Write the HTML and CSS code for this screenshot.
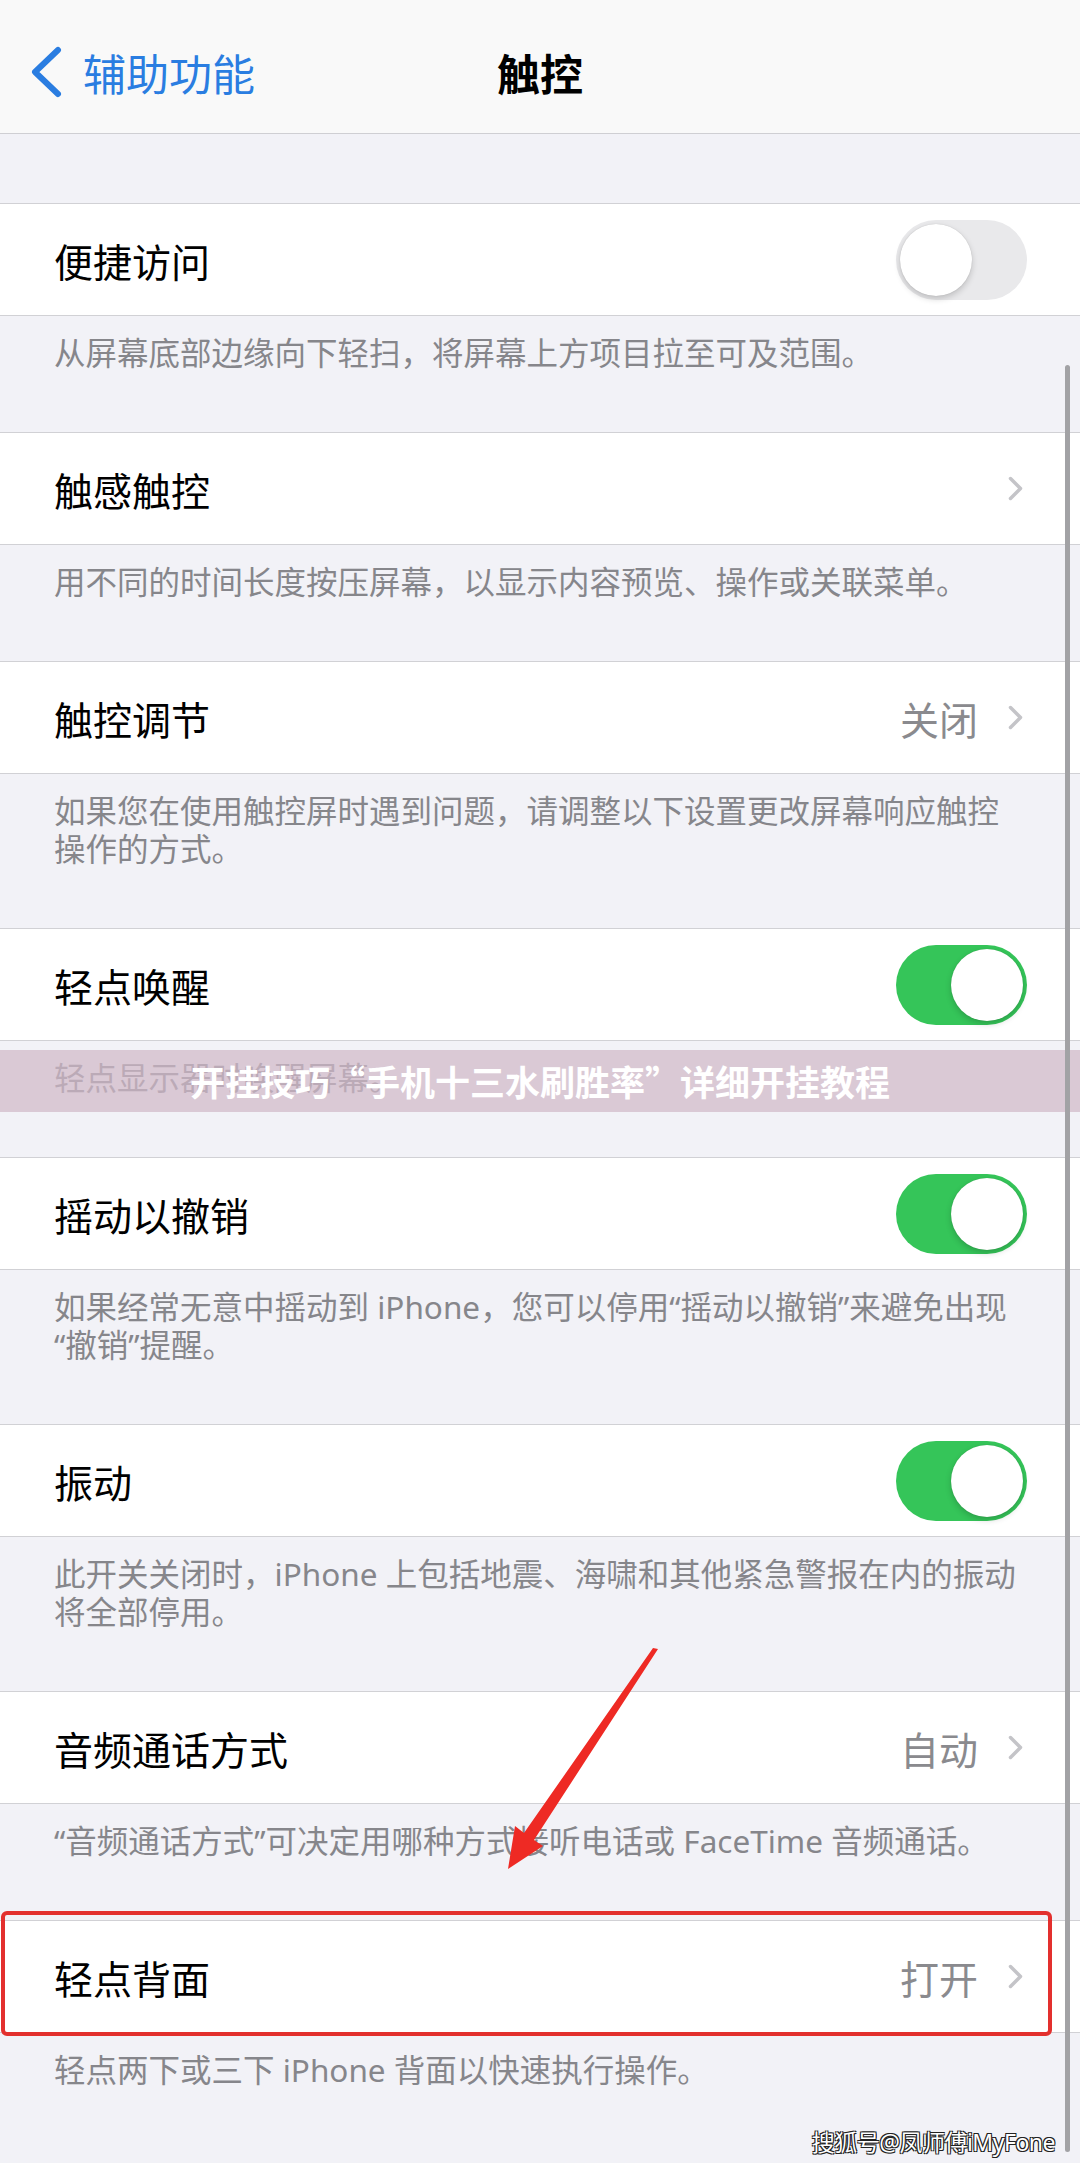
FILE: index.html
```html
<!DOCTYPE html>
<html lang="zh-CN">
<head>
    <meta charset="UTF-8">
    <meta name="viewport" content="width=device-width, initial-scale=1.0">
    <title>触控</title>
    <link rel="stylesheet" href="styles.css">
</head>
<body>
<div class="screen">
    <header class="navbar">
        <a class="back" href="#">
            <svg class="back_icon" width="34" height="52" viewBox="0 0 34 52">
                <polyline points="28,4 5,26 28,48" fill="none" stroke="#2a7de1" stroke-width="6" stroke-linecap="round" stroke-linejoin="round"/>
            </svg>
            <span>辅助功能</span>
        </a>
        <h1 class="title">触控</h1>
        <div></div>
    </header>

    <main class="list">
        <section class="group">
            <div class="cell">
                <span class="label">便捷访问</span>
                <span class="switch"></span>
            </div>
            <p class="footer">从屏幕底部边缘向下轻扫，将屏幕上方项目拉至可及范围。</p>
        </section>

        <section class="group">
            <div class="cell">
                <span class="label">触感触控</span>
                <span class="chevron"></span>
            </div>
            <p class="footer">用不同的时间长度按压屏幕，以显示内容预览、操作或关联菜单。</p>
        </section>

        <section class="group">
            <div class="cell">
                <span class="label">触控调节</span>
                <span class="value">关闭</span>
                <span class="chevron"></span>
            </div>
            <p class="footer">如果您在使用触控屏时遇到问题，请调整以下设置更改屏幕响应触控<br>操作的方式。</p>
        </section>

        <section class="group">
            <div class="cell">
                <span class="label">轻点唤醒</span>
                <span class="switch on"></span>
            </div>
            <p class="footer">轻点显示器时唤醒屏幕。</p>
        </section>

        <section class="group">
            <div class="cell">
                <span class="label">摇动以撤销</span>
                <span class="switch on"></span>
            </div>
            <p class="footer">如果经常无意中摇动到 iPhone，您可以停用“摇动以撤销”来避免出现<br>“撤销”提醒。</p>
        </section>

        <section class="group">
            <div class="cell">
                <span class="label">振动</span>
                <span class="switch on"></span>
            </div>
            <p class="footer">此开关关闭时，iPhone 上包括地震、海啸和其他紧急警报在内的振动<br>将全部停用。</p>
        </section>

        <section class="group">
            <div class="cell">
                <span class="label">音频通话方式</span>
                <span class="value">自动</span>
                <span class="chevron"></span>
            </div>
            <p class="footer">“音频通话方式”可决定用哪种方式接听电话或 FaceTime 音频通话。</p>
        </section>

        <section class="group">
            <div class="cell marked">
                <span class="label">轻点背面</span>
                <span class="value">打开</span>
                <span class="chevron"></span>
            </div>
            <p class="footer">轻点两下或三下 iPhone 背面以快速执行操作。</p>
        </section>
    </main>

    <!-- 覆盖在画面上的东西 -->
    <div class="banner">开挂技巧“手机十三水刷胜率”详细开挂教程</div>
    <div class="scrollbar"></div>
    <svg class="arrow" width="1080" height="2163" viewBox="0 0 1080 2163">
        <polygon points="658,1649 534,1840 543,1846 508,1869 515,1826 524,1833 653,1648" fill="#ee2a24"/>
    </svg>
    <div class="watermark">搜狐号@凤师傅iMyFone</div>
</div>
</body>
</html>
```

FILE: styles.css
```css
body {
    margin: 0;
    font-family: "Noto Sans", "Noto Sans CJK SC", sans-serif;
    background-color: #f2f2f7;
}
.screen {
    position: relative;
    width: 1080px;
    height: 2163px;
    overflow: hidden;
    background-color: #f2f2f7;
}

/* ナビゲーションバー */
.navbar {
    height: 133px;
    border-bottom: 1px solid #cfcfd3;
    background-color: #f9f9f9;
    display: grid;
    grid-template-columns: 1fr auto 1fr;
    align-items: center;
}
.back {
    display: flex;
    align-items: center;
    gap: 19px;
    padding-left: 30px;
    color: #2a7de1;
    font-size: 43px;
    text-decoration: none;
    margin-top: 11px;
}
.title {
    margin: 0;
    font-size: 43px;
    font-weight: 600;
    color: #000;
    margin-top: 11px;
}

/* リスト */
.list {
    padding-top: 69px;
}
.cell {
    height: 111px;
    background-color: #fff;
    border-top: 1px solid #d1d1d5;
    border-bottom: 1px solid #d1d1d5;
    display: flex;
    align-items: center;
    padding: 0 53px 0 54px;
}
.label {
    flex: 1;
    font-size: 39px;
    color: #000;
}
.value {
    font-size: 39px;
    color: #8a8a8e;
    margin-right: 30px;
}
.chevron {
    width: 15px;
    height: 25px;
    margin-right: 4px;
    background: no-repeat center / contain url("data:image/svg+xml,%3Csvg xmlns='http://www.w3.org/2000/svg' viewBox='0 0 15 25'%3E%3Cpolyline points='2.5,2.5 12.5,12.5 2.5,22.5' fill='none' stroke='%23c4c4c8' stroke-width='3.5' stroke-linecap='round' stroke-linejoin='round'/%3E%3C/svg%3E");
}
.footer {
    margin: 0;
    padding: 18px 54px 60px 54px;
    font-size: 31.5px;
    line-height: 38px;
    color: #86868b;
}

/* スイッチ */
.switch {
    position: relative;
    width: 131px;
    height: 80px;
    border-radius: 40px;
    background-color: #e9e9eb;
}
.switch::after {
    content: "";
    position: absolute;
    top: 4px;
    left: 4px;
    width: 72px;
    height: 72px;
    border-radius: 50%;
    background-color: #fff;
    box-shadow: 0 3px 6px rgba(0, 0, 0, 0.18), 0 0 1px rgba(0, 0, 0, 0.2);
}
.switch.on {
    background-color: #35c559;
}
.switch.on::after {
    left: 55px;
}

/* 赤い枠 */
.marked {
    position: relative;
}
.marked::after {
    content: "";
    position: absolute;
    top: -10px;
    bottom: -4px;
    left: 1px;
    right: 28px;
    border: 4px solid #e3302e;
    border-radius: 6px;
}

.banner {
    position: absolute;
    top: 1050px;
    left: 0;
    width: 100%;
    height: 62px;
    line-height: 62px;
    text-align: center;
    background-color: rgba(208, 184, 199, 0.72);
    color: #fff;
    font-family: "Noto Sans CJK SC", sans-serif;
    font-size: 35px;
    font-weight: bold;
}
.scrollbar {
    position: absolute;
    top: 365px;
    left: 1065px;
    width: 5px;
    height: 1787px;
    border-radius: 3px;
    background-color: #a2a2a5;
}
.arrow {
    position: absolute;
    top: 0;
    left: 0;
    pointer-events: none;
}
.watermark {
    position: absolute;
    top: 2124px;
    right: 25px;
    font-size: 23px;
    letter-spacing: -0.5px;
    color: #fff;
    text-shadow: 1px 1px 0 #222, -1px -1px 0 #222, 1px -1px 0 #222, -1px 1px 0 #222;
}
```
